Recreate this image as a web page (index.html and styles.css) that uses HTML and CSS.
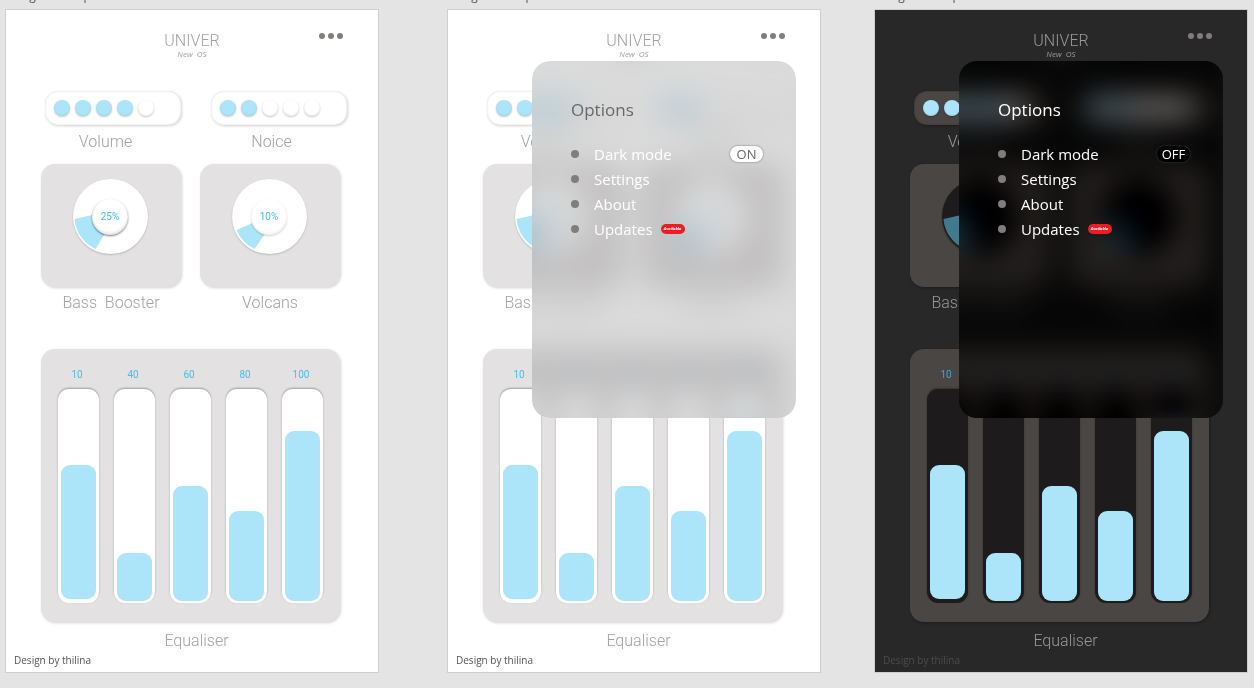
FILE: index.html
```
<!DOCTYPE html>
<html lang="en">
<head>
<meta charset="utf-8">
<meta name="viewport" content="width=device-width, initial-scale=1">
<title>Univer</title>
<link rel="stylesheet" href="styles.css">
</head>
<body>
<svg class="defs" aria-hidden="true">
  <symbol id="wedge-bass" viewBox="0 0 75 75"><path d="M1.5 40 L37 32 L37 46 L22.5 70 A36 36 0 0 1 1.5 40Z"/></symbol>
  <symbol id="wedge-volcans" viewBox="0 0 75 75"><path d="M4.5 51 L37 37 L37 49 L22.5 70 A36 36 0 0 1 4.5 51Z"/></symbol>
  <symbol id="more" viewBox="0 0 24 6"><circle cx="3" cy="3" r="3"/><circle cx="12" cy="3" r="3"/><circle cx="21" cy="3" r="3"/></symbol>
</svg>
<main class="canvas">
  <section class="artboard">
    <p class="artboard-name">Design Mockup</p>
    <div class="screen">
      <header class="top">
        <h1 class="brand">UNIVER</h1>
        <p class="edition">New&nbsp; OS</p>
        <button class="more" aria-label="Options"><svg class="more-icon"><use href="#more"/></svg></button>
      </header>
      <div class="levels">
        <div class="level">
          <div class="pill"><i class="dot on"></i><i class="dot on"></i><i class="dot on"></i><i class="dot on"></i><i class="dot"></i></div>
          <p class="caption">Volume</p>
        </div>
        <div class="level">
          <div class="pill"><i class="dot on"></i><i class="dot on"></i><i class="dot"></i><i class="dot"></i><i class="dot"></i></div>
          <p class="caption">Noice</p>
        </div>
      </div>
      <div class="dials">
        <div class="dial-group">
          <div class="card"><div class="dial"><svg class="wedge"><use href="#wedge-bass"/></svg><span class="knob raised">25%</span></div></div>
          <p class="caption">Bass&nbsp; Booster</p>
        </div>
        <div class="dial-group">
          <div class="card"><div class="dial"><svg class="wedge"><use href="#wedge-volcans"/></svg><span class="knob">10%</span></div></div>
          <p class="caption">Volcans</p>
        </div>
      </div>
      <div class="equaliser">
        <div class="band"><label for="a1">10</label><div class="track"><div class="fill" style="height:64%"></div><input type="range" id="a1" value="64"></div></div>
        <div class="band"><label for="a2">40</label><div class="track"><div class="fill" style="height:23%"></div><input type="range" id="a2" value="23"></div></div>
        <div class="band"><label for="a3">60</label><div class="track"><div class="fill" style="height:55%"></div><input type="range" id="a3" value="55"></div></div>
        <div class="band"><label for="a4">80</label><div class="track"><div class="fill" style="height:43%"></div><input type="range" id="a4" value="43"></div></div>
        <div class="band"><label for="a5">100</label><div class="track"><div class="fill" style="height:81%"></div><input type="range" id="a5" value="81"></div></div>
      </div>
      <p class="caption eq-caption">Equaliser</p>
      <footer class="credit">Design by thilina</footer>
    </div>
  </section>

  <section class="artboard second">
    <p class="artboard-name">Design Mockup</p>
    <div class="screen">
      <header class="top">
        <h1 class="brand">UNIVER</h1>
        <p class="edition">New&nbsp; OS</p>
        <button class="more" aria-label="Options"><svg class="more-icon"><use href="#more"/></svg></button>
      </header>
      <div class="levels">
        <div class="level">
          <div class="pill"><i class="dot on"></i><i class="dot on"></i><i class="dot on"></i><i class="dot on"></i><i class="dot"></i></div>
          <p class="caption">Volume</p>
        </div>
        <div class="level">
          <div class="pill"><i class="dot on"></i><i class="dot on"></i><i class="dot"></i><i class="dot"></i><i class="dot"></i></div>
          <p class="caption">Noice</p>
        </div>
      </div>
      <div class="dials">
        <div class="dial-group">
          <div class="card"><div class="dial"><svg class="wedge"><use href="#wedge-bass"/></svg><span class="knob raised">25%</span></div></div>
          <p class="caption">Bass&nbsp; Booster</p>
        </div>
        <div class="dial-group">
          <div class="card"><div class="dial"><svg class="wedge"><use href="#wedge-volcans"/></svg><span class="knob">10%</span></div></div>
          <p class="caption">Volcans</p>
        </div>
      </div>
      <div class="equaliser">
        <div class="band"><label for="b1">10</label><div class="track"><div class="fill" style="height:64%"></div><input type="range" id="b1" value="64"></div></div>
        <div class="band"><label for="b2">40</label><div class="track"><div class="fill" style="height:23%"></div><input type="range" id="b2" value="23"></div></div>
        <div class="band"><label for="b3">60</label><div class="track"><div class="fill" style="height:55%"></div><input type="range" id="b3" value="55"></div></div>
        <div class="band"><label for="b4">80</label><div class="track"><div class="fill" style="height:43%"></div><input type="range" id="b4" value="43"></div></div>
        <div class="band"><label for="b5">100</label><div class="track"><div class="fill" style="height:81%"></div><input type="range" id="b5" value="81"></div></div>
      </div>
      <p class="caption eq-caption">Equaliser</p>
      <footer class="credit">Design by thilina</footer>
      <nav class="options">
        <h2 class="options-title">Options</h2>
        <ul class="options-list">
          <li><label for="mode-light">Dark mode</label><button class="switch" id="mode-light">ON</button></li>
          <li><a href="#settings">Settings</a></li>
          <li><a href="#about">About</a></li>
          <li><a href="#updates">Updates</a><span class="badge">Available</span></li>
        </ul>
      </nav>
    </div>
  </section>

  <section class="artboard third dark">
    <p class="artboard-name">Design Mockup</p>
    <div class="screen">
      <header class="top">
        <h1 class="brand">UNIVER</h1>
        <p class="edition">New&nbsp; OS</p>
        <button class="more" aria-label="Options"><svg class="more-icon"><use href="#more"/></svg></button>
      </header>
      <div class="levels">
        <div class="level">
          <div class="pill"><i class="dot on"></i><i class="dot on"></i><i class="dot on"></i><i class="dot on"></i><i class="dot"></i></div>
          <p class="caption">Volume</p>
        </div>
        <div class="level">
          <div class="pill"><i class="dot on"></i><i class="dot on"></i><i class="dot"></i><i class="dot"></i><i class="dot"></i></div>
          <p class="caption">Noice</p>
        </div>
      </div>
      <div class="dials">
        <div class="dial-group">
          <div class="card"><div class="dial"><svg class="wedge"><use href="#wedge-bass"/></svg><span class="knob raised">25%</span></div></div>
          <p class="caption">Bass&nbsp; Booster</p>
        </div>
        <div class="dial-group">
          <div class="card"><div class="dial"><svg class="wedge"><use href="#wedge-volcans"/></svg><span class="knob">10%</span></div></div>
          <p class="caption">Volcans</p>
        </div>
      </div>
      <div class="equaliser">
        <div class="band"><label for="c1">10</label><div class="track"><div class="fill" style="height:64%"></div><input type="range" id="c1" value="64"></div></div>
        <div class="band"><label for="c2">40</label><div class="track"><div class="fill" style="height:23%"></div><input type="range" id="c2" value="23"></div></div>
        <div class="band"><label for="c3">60</label><div class="track"><div class="fill" style="height:55%"></div><input type="range" id="c3" value="55"></div></div>
        <div class="band"><label for="c4">80</label><div class="track"><div class="fill" style="height:43%"></div><input type="range" id="c4" value="43"></div></div>
        <div class="band"><label for="c5">100</label><div class="track"><div class="fill" style="height:81%"></div><input type="range" id="c5" value="81"></div></div>
      </div>
      <p class="caption eq-caption">Equaliser</p>
      <footer class="credit">Design by thilina</footer>
      <nav class="options">
        <h2 class="options-title">Options</h2>
        <ul class="options-list">
          <li><label for="mode-dark">Dark mode</label><button class="switch" id="mode-dark">OFF</button></li>
          <li><a href="#settings">Settings</a></li>
          <li><a href="#about">About</a></li>
          <li><a href="#updates">Updates</a><span class="badge">Available</span></li>
        </ul>
      </nav>
    </div>
  </section>
</main>
</body>
</html>
```
FILE: styles.css
```
* { box-sizing: border-box; }

body {
  margin: 0;
  background: #e4e4e4;
  font-family: Roboto, "Liberation Sans", sans-serif;
}

h1, h2, p, ul { margin: 0; padding: 0; font-weight: 300; }
button { border: 0; padding: 0; margin: 0; background: none; font: inherit; color: inherit; }
.defs { position: absolute; width: 0; height: 0; }

.canvas {
  display: grid;
  grid-template-columns: 374fr 68fr 374fr 53fr 374fr;
  padding: 0 6px 15px 5px;
}
.second { grid-column: 3; }
.third { grid-column: 5; }

.artboard {
  --surface: #fff;
  --panel: #e3e1e2;
  --pill: #fff;
  --track: #fff;
  --face: #fff;
  --empty: #fff;
  --wedge: #ace4fa;
  --value: #41bff0;
  --caption: #a3a3a3;
  --dots: #827d7d;
  --credit: #555;
  --edge: #cfcfcf;
  --shade: rgba(0, 0, 0, .18);
}
.dark {
  --surface: #282828;
  --panel: #4a4644;
  --pill: #4a4644;
  --track: #1e1b1c;
  --face: #1e1b1c;
  --empty: #fff;
  --wedge: #41798f;
  --value: #35a9d6;
  --caption: #999;
  --credit: #4c4c4c;
  --shade: rgba(0, 0, 0, .35);
}

/* the name sits partly above the top edge of the canvas */
.artboard-name {
  height: 9px;
  display: flex;
  align-items: flex-end;
  overflow: hidden;
  padding-bottom: 5px;
  font: 12px/16px "Open Sans", sans-serif;
  color: #555;
}

.screen {
  position: relative;
  border: 1px solid var(--edge);
  background: var(--surface);
  padding: 23px 38px 4px 35px;
}

.top { position: relative; text-align: center; height: 58px; margin-right: -3px; }
.brand { font-size: 16px; line-height: 16px; color: var(--caption); }
.edition { font: italic 8px/10px "Open Sans", sans-serif; color: var(--caption); }
.more { position: absolute; top: 0; right: 0; height: 6px; line-height: 0; }
.more-icon { width: 24px; height: 6px; fill: var(--dots); }

.caption {
  text-align: center;
  font-size: 16px;
  line-height: 20px;
  font-weight: 300;
  color: var(--caption);
}

.levels {
  display: grid;
  grid-template-columns: 1fr 1fr;
  gap: 30px;
  margin: 0 -7px 0 4px;
}
.level .caption { padding: 7px 15px 0 0; }
.pill {
  display: flex;
  align-items: center;
  gap: 5px;
  height: 34px;
  padding: 0 9px;
  border-radius: 13px;
  background: var(--pill);
  box-shadow: 1px 1px 3px var(--shade), inset 0 0 2px var(--shade);
}
.dot {
  width: 16px;
  height: 16px;
  border-radius: 50%;
  background: var(--empty);
  box-shadow: 0 1px 2px rgba(0, 0, 0, .22), inset 0 -1px 2px rgba(0, 0, 0, .06);
}
.dot.on { background: #ace4fa; }

.dials {
  display: grid;
  grid-template-columns: 1fr 1fr;
  gap: 19px;
  margin-top: 12px;
}
.card {
  height: 123px;
  padding: 15px 2px 0 0;
  border-radius: 14px;
  background: var(--panel);
  box-shadow: 1px 1px 3px var(--shade);
}
.dial {
  display: grid;
  place-items: center;
  width: 75px;
  height: 75px;
  margin: 0 auto;
  border-radius: 50%;
  background: var(--face);
  box-shadow: 0 1px 2px var(--shade);
}
.wedge { grid-area: 1 / 1; width: 75px; height: 75px; fill: var(--wedge); }
.knob {
  grid-area: 1 / 1;
  width: 36px;
  height: 36px;
  border-radius: 50%;
  background: var(--face);
  box-shadow: 0 1px 2px rgba(0, 0, 0, .18), inset 0 -2px 3px rgba(0, 0, 0, .06);
  text-align: center;
  font-size: 10px;
  line-height: 36px;
  color: var(--value);
}
.knob.raised { box-shadow: 0 1px 2px rgba(0, 0, 0, .5), inset 0 -2px 3px rgba(0, 0, 0, .12); }
.dial-group .caption { padding-top: 6px; }

.equaliser {
  display: grid;
  grid-template-columns: repeat(5, 1fr);
  gap: 15px;
  margin-top: 36px;
  padding: 18px 17px 19px;
  border-radius: 14px;
  background: var(--panel);
  box-shadow: 1px 1px 3px var(--shade);
}
.band label {
  display: block;
  height: 22px;
  padding-right: 3px;
  text-align: center;
  font-size: 10px;
  line-height: 16px;
  color: var(--value);
}
.track {
  position: relative;
  display: flex;
  flex-direction: column;
  justify-content: flex-end;
  height: 214px;
  padding: 2px 3px;
  border-radius: 11px;
  background: var(--track);
  box-shadow: 0 -1px 2px rgba(0, 0, 0, .3);
}
.fill { border-radius: 9px; background: #ace4fa; }
.band:first-child .fill { margin-bottom: 2px; }
.track input { position: absolute; inset: 0; width: 100%; height: 100%; margin: 0; opacity: 0; writing-mode: vertical-lr; direction: rtl; }

.eq-caption { padding: 9px 0 0 12px; }
.credit {
  margin: 1px 0 0 -27px;
  font: 10px/16px "Open Sans", sans-serif;
  color: var(--credit);
}

.options {
  position: absolute;
  z-index: 2;
  top: 51px;
  left: 84px;
  right: 24px;
  height: 357px;
  padding: 37px 33px 0 39px;
  font-family: "Open Sans", "Noto Sans", sans-serif;
  color: #fff;
}
/* frosted glass: larger than the panel so the blur stays even up to its edge */
.options::before {
  content: "";
  position: absolute;
  z-index: -1;
  inset: -30px;
  border: 30px solid transparent;
  border-radius: 48px;
  background: rgba(0, 0, 0, .14) padding-box;
  -webkit-mask: linear-gradient(#000, #000) padding-box;
  mask: linear-gradient(#000, #000) padding-box;
  backdrop-filter: blur(15px);
}
.dark .options::before {
  background: none;
  backdrop-filter: blur(15px) brightness(.724) contrast(1.243);
}
.options-title { font-size: 17px; line-height: 24px; font-weight: 400; color: #6b6767; }
.dark .options-title { color: #fff; }
.options-list { list-style: none; margin-top: 19px; font-size: 15px; font-weight: 400; }
.options-list li { display: flex; align-items: center; height: 25px; }
.options-list li::before {
  content: "";
  width: 8px;
  height: 8px;
  margin-right: 15px;
  border-radius: 50%;
  background: var(--dots);
}
.options-list a { color: inherit; text-decoration: none; }
.switch {
  width: 33px;
  height: 16px;
  margin-left: auto;
  border-radius: 8px;
  background: #fff;
  box-shadow: 0 0 2px rgba(0, 0, 0, .5);
  font-size: 13px;
  line-height: 16px;
  color: #6b6767;
}
.dark .switch { background: #000; color: #fff; box-shadow: 0 0 2px #444; }
.badge {
  width: 24px;
  height: 10px;
  margin-left: 8px;
  border-radius: 5px;
  background: #ee1c24;
  text-align: center;
  font-size: 4px;
  line-height: 10px;
  font-weight: 700;
  font-style: italic;
}
```
